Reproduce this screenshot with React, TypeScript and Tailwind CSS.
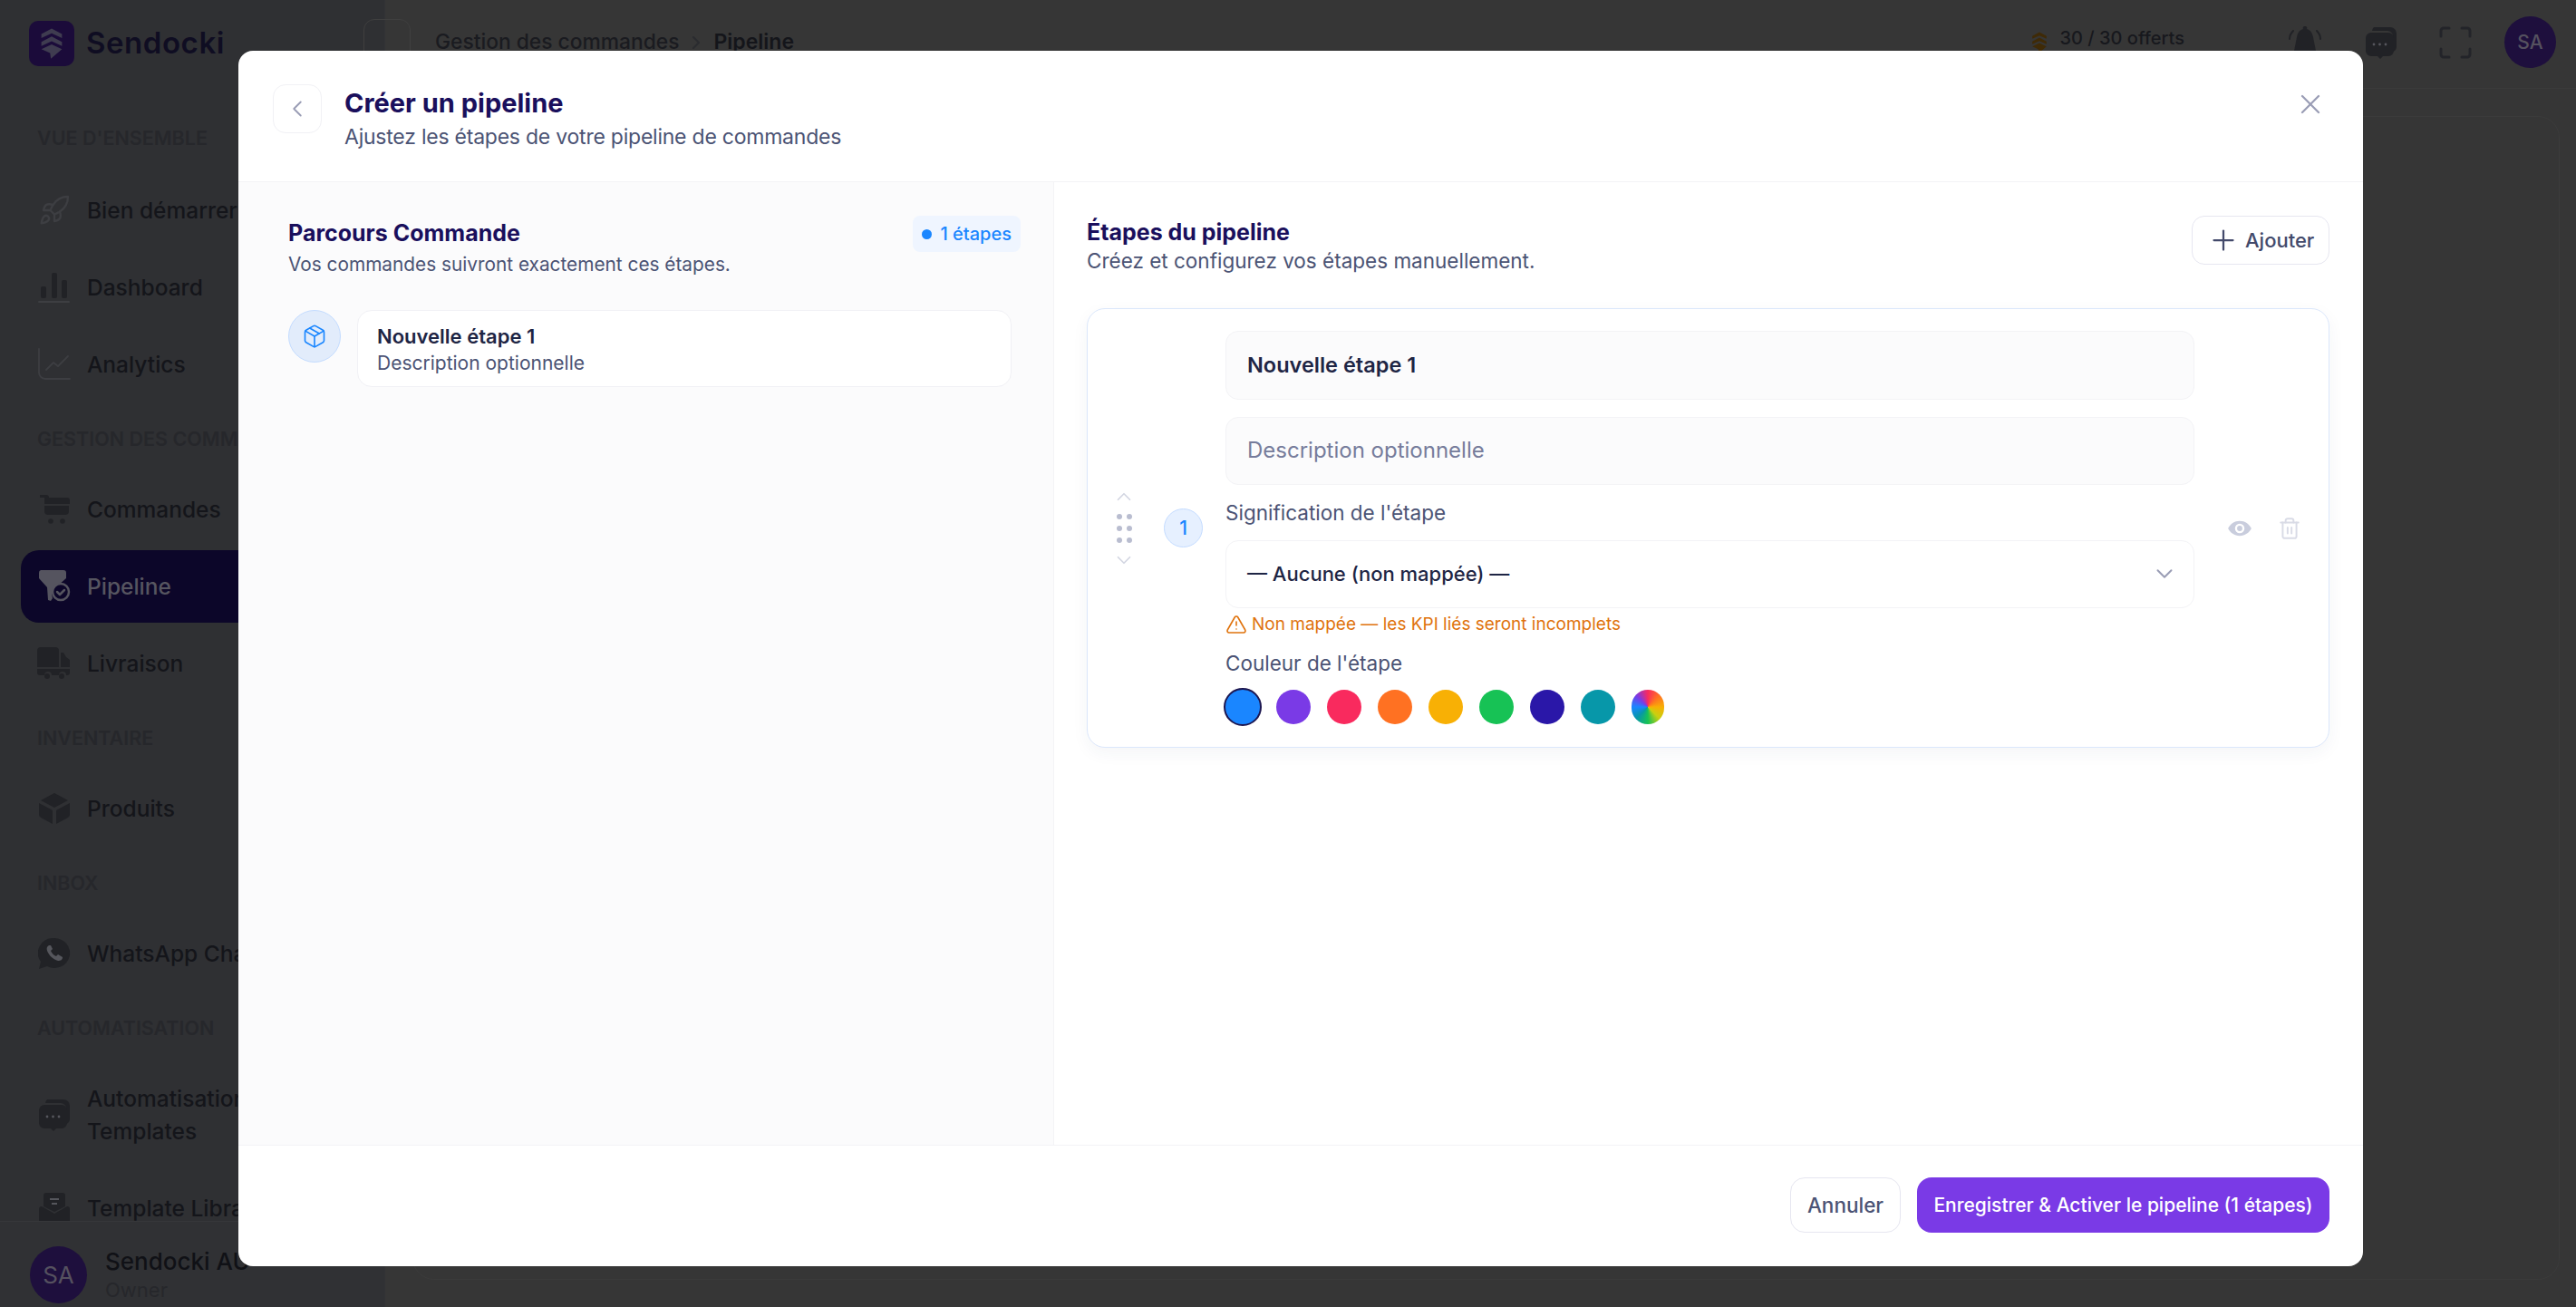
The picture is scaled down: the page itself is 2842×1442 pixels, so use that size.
import React from "react";
import { ChevronLeft, ChevronRight, ChevronUp, ChevronDown, X, Plus, TriangleAlert, Package, Rocket, Trash2 } from "lucide-react";

const Section = ({ label, first }: { label: string; first?: boolean }) => (
  <div className={first ? "h-[36px] shrink-0 mb-[22px] pl-[41px] flex items-center text-[21.5px] font-semibold text-[#26272b] whitespace-nowrap" : "h-[36px] shrink-0 mt-[19px] mb-[20px] pl-[41px] flex items-center text-[21.5px] font-semibold text-[#26272b] whitespace-nowrap"}>
    {label}
  </div>
);

const Item = ({ icon, label, active, tall }: { icon: React.ReactNode; label: React.ReactNode; active?: boolean; tall?: boolean }) => (
  <div className={`shrink-0 mb-[5px] ml-[23px] flex items-center gap-[17px] pl-[18px] rounded-l-[20px] text-[24.5px] font-medium whitespace-nowrap ${tall ? "h-[116px] leading-[36px]" : "h-[80px]"} ${active ? "bg-[#0c0629] text-[#565560]" : "text-[#14151a]"}`}>
    <span className="w-[38px] h-[38px] flex items-center justify-center shrink-0">{icon}</span>
    <span>{label}</span>
  </div>
);

const ic = "#212226";

const LogoMark = ({ className, color }: { className: string; color: string }) => (
  <svg viewBox="0 0 32 40" className={className} fill={color}>
    <path d="M16 1 29 8v5L16 7 3 13V8z" />
    <path d="M16 11 29 18v5L16 17 3 23v-5z" />
    <path d="M16 21 29 27 15 39l-1-7-11-5z" />
  </svg>
);

const ChatIcon = ({ className }: { className: string }) => (
  <svg viewBox="0 0 36 36" className={className} fill={ic}>
    <path d="M10 1h18a7 7 0 0 1 7 7v15a6 6 0 0 1-4 5V11a6 6 0 0 0-6-6H8a7 7 0 0 1 2-4z" />
    <path d="M7 7h19a6 6 0 0 1 6 6v14a6 6 0 0 1-6 6h-6l-3 3-3-3H7a6 6 0 0 1-6-6V13a6 6 0 0 1 6-6z" />
    <circle cx="10" cy="20" r="1.4" fill="#55565c" />
    <circle cx="16.500" cy="20" r="1.400" fill="#55565c" />
    <circle cx="23" cy="20" r="1.400" fill="#55565c" />
  </svg>
);

const Swatch = ({ c, selected }: { c: string; selected?: boolean }) => (
  <span
    className={selected ? "w-[42px] h-[42px] rounded-full border-2 border-[#1c1650] -mx-[2px] shrink-0" : "w-[38px] h-[38px] rounded-full shrink-0"}
    style={{ backgroundColor: c }}
  />
);

export default function App() {
  return (
    <div className="relative w-[2842px] h-[1442px] overflow-hidden flex bg-[#363636] text-[#14151a]" style={{ fontFamily: "Inter, 'Noto Sans', sans-serif" }}>
      {/* Sidebar */}
      <aside className="w-[425px] h-full shrink-0 flex flex-col bg-[#2f3033] border-r border-[#323336]">
        <div className="h-[98px] shrink-0 flex items-center gap-[13px] pl-[32px] pb-[3px]">
          <div className="w-[50px] h-[50px] rounded-[10px] bg-[#1b0b3a] flex items-center justify-center">
            <LogoMark className="w-[28px] h-[36px]" color="#3f3c50" />
          </div>
          <span className="text-[33px] font-semibold tracking-[0.55px] text-[#0f0d22]">Sendocki</span>
        </div>
        <nav className="flex-1 overflow-hidden pt-[36px] flex flex-col">
          <Section first label="VUE D'ENSEMBLE" />
          <Item label="Bien démarrer" icon={<Rocket size={36} color="#3d3e42" strokeWidth={1.6} />} />
          <Item label="Dashboard" icon={
            <svg viewBox="0 0 36 36" className="w-[36px] h-[36px]" fill={ic}>
              <rect x="3" y="17" width="6" height="13" rx="2" />
              <rect x="15" y="2" width="6" height="28" rx="2" />
              <rect x="26" y="10" width="6" height="20" rx="2" />
              <rect x="0" y="33" width="35" height="2" rx="1" fill="#3d3e42" />
            </svg>} />
          <Item label="Analytics" icon={
            <svg viewBox="0 0 36 36" className="w-[36px] h-[36px]" fill="none" stroke="#3d3e42" strokeWidth="1.800" strokeLinecap="round" strokeLinejoin="round">
              <path d="M1 1v26a7 7 0 0 0 7 7h27" />
              <path d="M9 24l8-8 5 4 11-11" />
            </svg>} />
          <Section label="GESTION DES COMMANDES" />
          <Item label="Commandes" icon={
            <svg viewBox="0 0 36 34" className="w-[36px] h-[34px]" fill={ic}>
              <path d="M2 1h7a3 3 0 0 1 3 3h20a3 3 0 0 1 3 3v4H7V4H2z" />
              <path d="M7 13h27v6a4 4 0 0 1-4 4H11a4 4 0 0 1-4-4z" />
              <circle cx="14" cy="30" r="2.800" />
              <circle cx="27" cy="30" r="2.800" />
            </svg>} />
          <Item active label="Pipeline" icon={
            <svg viewBox="0 0 36 36" className="w-[36px] h-[36px]">
              <path d="M3 0h25a3 3 0 0 1 3 3v6l-9 8v-1a12 12 0 0 0-6 15l-2 3-3-1-1-14L1 9V3a3 3 0 0 1 2-3z" fill="#55545f" />
              <circle cx="25" cy="24" r="9" fill="#0c0629" stroke="#55545f" strokeWidth="2.500" />
              <path d="M21 24l3 3 5-5" fill="none" stroke="#55545f" strokeWidth="2.500" strokeLinecap="round" strokeLinejoin="round" />
            </svg>} />
          <Item label="Livraison" icon={
            <svg viewBox="0 0 38 36" className="w-[38px] h-[36px]" fill={ic}>
              <path d="M4 0h16a4 4 0 0 1 4 4v18H0V4a4 4 0 0 1 4-4z" />
              <path d="M26 6h3l3 5 4 3v8H26z" />
              <path d="M0 24h36v4a3 3 0 0 1-3 3h-1a4 4 0 0 0-8 0h-8a4 4 0 0 0-8 0H3a3 3 0 0 1-3-3z" />
              <circle cx="11" cy="32" r="3" />
              <circle cx="27" cy="32" r="3" />
            </svg>} />
          <Section label="INVENTAIRE" />
          <Item label="Produits" icon={
            <svg viewBox="0 0 36 36" className="w-[36px] h-[36px]" fill={ic}>
              <path d="M18 1l15 8-15 8-15-8z" />
              <path d="M1 12l15 8v15L3 28a4 4 0 0 1-2-3z" />
              <path d="M35 12l-15 8v15l13-7a4 4 0 0 0 2-3z" />
            </svg>} />
          <Section label="INBOX" />
          <Item label="WhatsApp Chat" icon={
            <svg viewBox="0 0 36 34" className="w-[36px] h-[34px]" fill={ic}>
              <path d="M18 0a17 16.500 0 1 1-8 31l-9 3 2-8A17 16.500 0 0 1 18 0z" />
              <path d="M12 8c-2 1-3 3-2 6 2 5 6 9 12 11 3 0 5-1 5-4l-5-3-2 2c-3-1-5-4-6-6l2-2-2-4z" fill="#55565c" />
            </svg>} />
          <Section label="AUTOMATISATION" />
          <Item tall label={<>Automatisations<br />Templates</>} icon={<ChatIcon className="w-[36px] h-[36px]" />} />
          <Item label="Template Library" icon={
            <svg viewBox="0 0 34 36" className="w-[34px] h-[36px]" fill={ic}>
              <path d="M8 1h18a3 3 0 0 1 3 3v12l-12 6-12-6V4a3 3 0 0 1 3-3z" />
              <path d="M0 18a3 3 0 0 1 3-2l14 8 14-8a3 3 0 0 1 3 2v18H0z" />
              <path d="M12 8h10M14 13h6" stroke="#55565c" strokeWidth="2" />
            </svg>} />
        </nav>
        <div className="h-[95px] shrink-0 bg-[#303134] border-t border-[#36373a] flex items-center gap-[20px] pl-[33px] pt-[23px]">
          <div className="w-[63px] h-[63px] rounded-full bg-[#1e0f3d] flex items-center justify-center text-[26px] text-[#55515f]">SA</div>
          <div className="flex flex-col whitespace-nowrap">
            <span className="text-[26px] leading-[33px] font-medium text-[#101116]">Sendocki AU</span>
            <span className="text-[22px] leading-[30px] text-[#26272b]">Owner</span>
          </div>
        </div>
      </aside>

      {/* Main */}
      <main className="flex-1 flex flex-col min-w-0">
        <header className="h-[98px] shrink-0 flex items-center border-b border-[#3b3b3b] pb-[4px]">
          <div className="w-[52px] h-[52px] -ml-[24px] rounded-[12px] border border-[#3f3f3f] mr-[27px] shrink-0" />
          <span className="text-[22.8px] font-medium text-[#1a1b20] whitespace-nowrap">Gestion des commandes</span>
          <ChevronRight size={24} color="#2a2b2f" className="mx-[7px]" />
          <span className="text-[23px] font-semibold text-[#14151a]">Pipeline</span>
          <div className="ml-auto flex items-center mr-[22px]">
            <LogoMark className="w-[20px] h-[24px] mr-[13px]" color="#3f2a06" />
            <span className="text-[20px] font-medium text-[#17181d] -mt-[10px] whitespace-nowrap">30 / 30 offerts</span>
            <svg viewBox="0 0 36 36" className="w-[36px] h-[36px] ml-[115px]" fill={ic}>
              <path d="M18 0a2 2 0 0 1 2 3c4 1 6 4 7 9l3 15a2 2 0 0 1-2 3H8a2 2 0 0 1-2-3l3-15c1-5 3-8 7-9a2 2 0 0 1 2-3z" />
              <path d="M5 5C2 8 1 11 1 14M31 5c3 3 4 6 4 9" fill="none" stroke={ic} strokeWidth="2" strokeLinecap="round" />
            </svg>
            <ChatIcon className="w-[36px] h-[36px] ml-[48px]" />
            <svg viewBox="0 0 36 36" className="w-[36px] h-[36px] ml-[46px]" fill="none" stroke="#232429" strokeWidth="3" strokeLinecap="round">
              <path d="M2 11V5a3 3 0 0 1 3-3h6M25 2h6a3 3 0 0 1 3 3v6M34 25v6a3 3 0 0 1-3 3h-6M11 34H5a3 3 0 0 1-3-3v-6" />
            </svg>
            <div className="w-[57px] h-[57px] rounded-full bg-[#1e0f3d] ml-[36px] flex items-center justify-center text-[21px] font-medium text-[#55515f]">SA</div>
          </div>
        </header>
        <div className="flex-1 p-[30px] pr-[18px]">
          <div className="h-full rounded-[24px] border border-[#3b3b3b]" />
        </div>
      </main>

      {/* Modal */}
      <div className="absolute left-[263px] top-[56px] w-[2344px] h-[1341px] bg-white rounded-[16px] flex flex-col overflow-hidden">
        <div className="h-[145px] shrink-0 border-b border-[#f3f3f6] flex items-start pt-[37px] pl-[38px] pr-[40px]">
          <button className="w-[54px] h-[54px] rounded-[14px] border border-[#f1f1f5] flex items-center justify-center mr-[25px] shrink-0">
            <ChevronLeft size={30} color="#9a9db5" strokeWidth={1.5} />
          </button>
          <div className="flex flex-col pt-[1px]">
            <h1 className="text-[29px] leading-[40px] font-bold text-[#1a0f5c]">Créer un pipeline</h1>
            <p className="text-[23px] leading-[32px] tracking-[-0.01em] text-[#4b5374] mt-[1px]">Ajustez les étapes de votre pipeline de commandes</p>
          </div>
          <X size={36} color="#9a9db5" strokeWidth={1.5} className="ml-auto mt-[4px]" />
        </div>

        <div className="flex-1 flex min-h-0">
          {/* Left panel */}
          <section className="w-[900px] shrink-0 bg-[#fbfbfc] border-r border-[#f3f3f6] pl-[55px] pr-[36px] pt-[37px]">
            <div className="flex items-start justify-between">
              <div>
                <h2 className="text-[25px] leading-[34px] font-bold text-[#1a0f5c] mt-[2px]">Parcours Commande</h2>
                <p className="text-[20.8px] leading-[30px] text-[#4b5374] mt-[3px]">Vos commandes suivront exactement ces étapes.</p>
              </div>
              <span className="h-[40px] px-[10px] rounded-[8px] bg-[#eff5ff] text-[20px] font-medium text-[#1a86ff] flex items-center gap-[9px]">
                <span className="w-[11px] h-[11px] rounded-full bg-[#1a86ff]" />1 étapes
              </span>
            </div>
            <div className="flex items-start gap-[18px] mt-[35px] pr-[10px]">
              <div className="w-[58px] h-[58px] rounded-full bg-[#e2ecfb] border border-[#c4dcff] flex items-center justify-center shrink-0">
                <Package size={28} color="#1a86ff" strokeWidth={1.4} />
              </div>
              <div className="flex-1 h-[85px] rounded-[16px] bg-white border border-[#f1f1f5] pl-[21px] pt-[12px]">
                <div className="text-[22px] leading-[32px] font-semibold text-[#1e2544]">Nouvelle étape 1</div>
                <div className="text-[21px] leading-[28px] text-[#4b5374]">Description optionnelle</div>
              </div>
            </div>
          </section>

          {/* Right panel */}
          <section className="flex-1 min-w-0 pl-[36px] pr-[37px] pt-[38px]">
            <div className="flex items-start justify-between">
              <div>
                <h2 className="text-[25px] leading-[34px] font-bold text-[#1a0f5c]">Étapes du pipeline</h2>
                <p className="text-[22.5px] leading-[30px] text-[#4b5374]">Créez et configurez vos étapes manuellement.</p>
              </div>
              <button className="w-[152px] h-[54px] -mt-[1px] rounded-[14px] border border-[#e6e6f0] bg-white flex items-center justify-start pl-[16px] gap-[6px] text-[22px] font-medium text-[#434a6b]">
                <Plus size={36} color="#434a6b" strokeWidth={1.5} />Ajouter
              </button>
            </div>

            <div className="mt-[37px] h-[485px] rounded-[20px] border border-[#dbe7fb] bg-white shadow-[0_6px_18px_rgba(40,50,90,0.05)] flex items-center pl-[31px] pr-[32px]">
              <div className="flex flex-col items-center w-[17px] shrink-0">
                <ChevronUp size={26} color="#d3d6e2" strokeWidth={1.6} />
                <div className="grid grid-cols-2 gap-x-[6px] gap-y-[7px] my-[6px] w-[16px]">
                  {[0, 1, 2, 3, 4, 5].map((i) => (
                    <span key={i} className="w-[6px] h-[6px] rounded-full bg-[#b9bdd0]" />
                  ))}
                </div>
                <ChevronDown size={26} color="#d3d6e2" strokeWidth={1.6} />
              </div>
              <div className="w-[43px] h-[43px] rounded-full bg-[#e6f0ff] border border-[#c4dcff] flex items-center justify-center text-[21px] font-medium text-[#1a86ff] ml-[36px] mr-[25px] shrink-0">1</div>
              <div className="w-[1069px] shrink-0">
                <div className="h-[76px] rounded-[14px] bg-[#fbfbfc] border border-[#f3f3f6] flex items-center pl-[23px] text-[23.5px] font-semibold text-[#1e2544]">Nouvelle étape 1</div>
                <div className="h-[75px] mt-[19px] rounded-[14px] bg-[#fbfbfc] border border-[#f3f3f6] flex items-center pl-[23px] text-[24px] text-[#767c9b]">Description optionnelle</div>
                <div className="text-[22.5px] leading-[32px] text-[#4b5374] mt-[15px]">Signification de l'étape</div>
                <div className="h-[75px] mt-[14px] rounded-[14px] bg-white border border-[#f3f3f6] flex items-center justify-between pl-[23px] pr-[17px] text-[22px] font-medium text-[#1e2544]">
                  — Aucune (non mappée) —
                  <ChevronDown size={30} color="#9a9db5" strokeWidth={1.6} />
                </div>
                <div className="flex items-center gap-[5px] mt-[4px] text-[19px] leading-[28px] text-[#e0730d]">
                  <TriangleAlert size={24} color="#e0730d" strokeWidth={1.6} />Non mappée — les KPI liés seront incomplets
                </div>
                <div className="text-[22.5px] leading-[32px] text-[#4b5374] mt-[13px]">Couleur de l'étape</div>
                <div className="flex items-center gap-[18px] mt-[11px]">
                  <Swatch selected c="#1a86ff" />
                  <Swatch c="#7a3ae6" />
                  <Swatch c="#f92a5e" />
                  <Swatch c="#ff7122" />
                  <Swatch c="#f8b005" />
                  <Swatch c="#17c255" />
                  <Swatch c="#2a17a8" />
                  <Swatch c="#0797a9" />
                  <span className="w-[36px] h-[38px] rounded-full shrink-0" style={{ background: "conic-gradient(#f92a5e,#ff7122,#f8b005,#c8d010,#17c255,#0797a9,#1a86ff,#7a3ae6,#f92a5e)" }} />
                </div>
              </div>
              <svg viewBox="0 0 24 24" className="w-[28px] h-[28px] ml-[36px] shrink-0" fill="#c9cddd">
                <path d="M12 5C7 5 3 8 1 12c2 4 6 7 11 7s9-3 11-7c-2-4-6-7-11-7zm0 11.500a4.500 4.500 0 1 1 0-9 4.500 4.500 0 0 1 0 9zm0-7a2.500 2.500 0 1 0 0 5 2.500 2.500 0 0 0 0-5z" />
              </svg>
              <Trash2 size={26} color="#d9dbe6" strokeWidth={1.8} className="ml-[28px] shrink-0" />
            </div>
          </section>
        </div>

        <div className="h-[134px] shrink-0 border-t border-[#f3f3f6] flex items-start justify-end gap-[18px] pt-[35px] pr-[37px]">
          <button className="w-[122px] h-[61px] rounded-[16px] border border-[#e6e6f0] bg-white text-[22.5px] font-medium text-[#4b5374]">Annuler</button>
          <button className="w-[455px] h-[61px] rounded-[16px] bg-[#7a3ae6] text-[21px] font-medium text-white whitespace-nowrap">Enregistrer &amp; Activer le pipeline (1 étapes)</button>
        </div>
      </div>
    </div>
  );
}
